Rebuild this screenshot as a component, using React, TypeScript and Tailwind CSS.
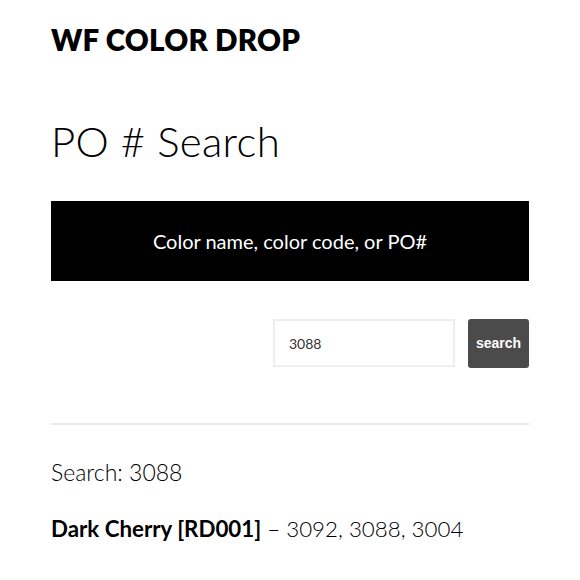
import React, { useState } from 'react';

const App: React.FC = () => {
  const [query, setQuery] = useState('3088');

  return (
    <div className="min-h-screen bg-white px-[51px] text-black" style={{ fontFamily: 'Lato, "Noto Sans", sans-serif' }}>
      <header className="pt-[22px]">
        <h1 className="text-[29.5px] font-extrabold leading-[36px] tracking-[0.2px]">WF COLOR DROP</h1>
      </header>

      <main>
        <h2 className="mt-[58px] text-[42px] font-light leading-[50px] tracking-[0.3px]">PO # Search</h2>

        {/* search banner */}
        <div className="mt-[35px] flex h-[80px] items-center justify-center bg-black">
          <span className="text-[20px] text-white">Color name, color code, or PO#</span>
        </div>

        <form className="mt-[38px] flex justify-end gap-[13px]" onSubmit={e => e.preventDefault()}>
          <input
            value={query}
            onChange={e => setQuery(e.target.value)}
            className="h-[48px] w-[182px] border-2 border-[#eeeeee] px-[14px] text-[14px] text-[#333] outline-none"
          />
          <button type="submit" className="h-[49px] w-[61px] rounded-[3px] bg-[#4b4b4b] text-[14px] font-bold text-white" style={{ fontFamily: '"Liberation Sans", Arial, sans-serif' }}>
            search
          </button>
        </form>

        <hr className="mt-[55px] border-t-2 border-[#ebebeb]" />

        <p className="mt-[32px] text-[23px] font-light leading-[30px]">Search: 3088</p>
        <p className="mt-[27px] text-[22.3px] font-light leading-[30px]">
          <strong className="font-bold">Dark Cherry [RD001]</strong> – 3092, 3088, 3004
        </p>
      </main>
    </div>
  );
};

export default App;
